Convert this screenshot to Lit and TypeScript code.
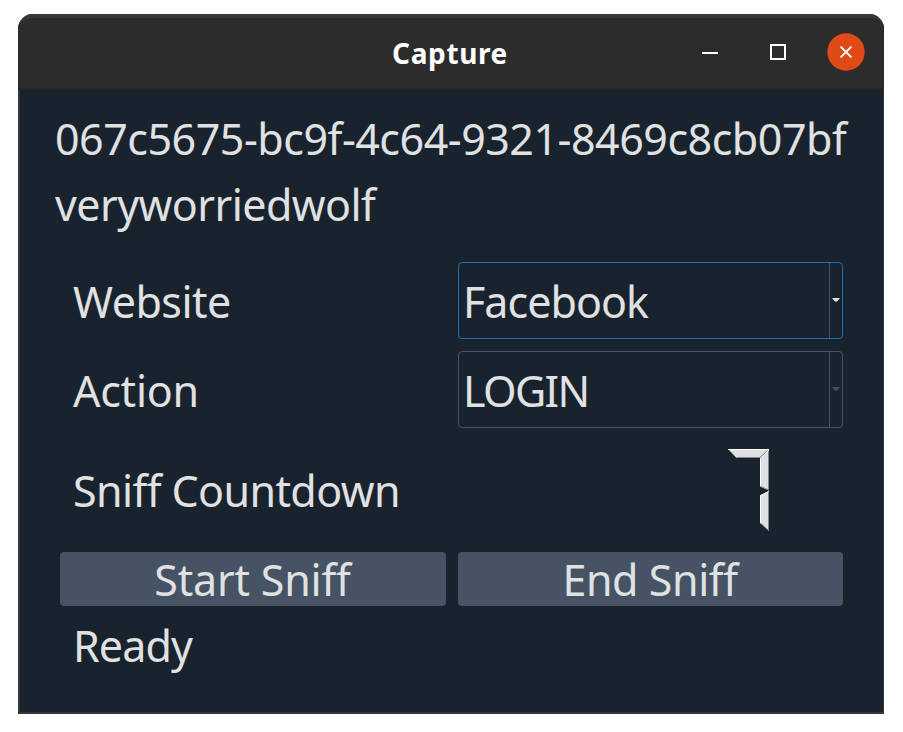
import { LitElement, html, css, svg } from "lit";
import { customElement, property } from "lit/decorators.js";
import { classMap } from "lit/directives/class-map.js";

@customElement("title-bar")
class TitleBar extends LitElement {
  static styles = css`
    :host {
      display: grid;
      grid-template-columns: 1fr auto 1fr;
      align-items: center;
      box-sizing: border-box;
      height: 76px;
      margin: 0 0 0 -2px;
      padding: 0 18px;
      border-top: 4px solid #383838;
      border-bottom: 2px solid #272727;
      border-radius: 15px 15px 0 0;
      background: #2c2c2c;
      color: #fff;
    }
    .title {
      grid-column: 2;
      font-size: 28px;
      font-weight: 700;
      line-height: 38px;
      letter-spacing: 0.62px;
      padding: 0 2px 1px 0;
    }
    .controls {
      display: flex;
      justify-content: flex-end;
      padding-bottom: 2px;
    }
    svg {
      display: block;
    }
  `;

  @property() heading = "";

  render() {
    return html`
      <span class="title">${this.heading}</span>
      <div class="controls">
        <svg width="176" height="40" viewBox="0 0 176 40">
          <rect x="12" y="20" width="16" height="2" fill="#fff" />
          <rect x="81" y="13" width="14" height="14" fill="none" stroke="#fff" stroke-width="2" />
          <circle cx="156" cy="20" r="18.7" fill="#e04a16" />
          <path d="M150.6 14.6 161.4 25.4M161.4 14.6 150.6 25.4" stroke="#fff" stroke-width="2" />
        </svg>
      </div>
    `;
  }
}

@customElement("combo-box")
class ComboBox extends LitElement {
  static styles = css`
    :host {
      display: block;
    }
    .box {
      display: flex;
      box-sizing: border-box;
      height: 77px;
      border: 1px solid #455364;
      border-radius: 4px;
      color: #455364;
    }
    .focused {
      border-color: #1a72bb;
    }
    .value {
      flex: 1;
      padding-left: 4px;
      line-height: 77px;
      color: #e0e1e3;
    }
    .facebook {
      letter-spacing: -0.97px;
    }
    .login {
      letter-spacing: -1.65px;
    }
    .drop {
      display: flex;
      align-items: center;
      justify-content: center;
      box-sizing: border-box;
      width: 13px;
      height: 75px;
      padding-bottom: 1px;
      border-left: 1px solid #455364;
    }
    .focused .drop svg {
      color: #e0e1e3;
    }
  `;

  @property() value = "";
  @property({ type: Boolean }) focused = false;

  render() {
    return html`
      <div class=${classMap({ box: true, focused: this.focused })}>
        <span class=${classMap({ value: true, [this.value.toLowerCase()]: true })}>${this.value}</span>
        <span class="drop">
          <svg width="8" height="4" viewBox="0 0 8 4"><path d="M0 0H8L5.5 3Q4 4.6 2.5 3Z" fill="currentColor" /></svg>
        </span>
      </div>
    `;
  }
}

/* Seven segments of a 42 x 83 digit: face outline, lit edge, shaded edge. */
const SEGMENTS: Record<string, [string, string, string]> = {
  top: ["M0 0H41L32 9H8.5Z", "M0 .5H41", "M8.5 8.5H32L40.5 .5"],
  upperRight: ["M41 0V41.5L32 37.5V9.5Z", "M32.5 37.5V9.5L41 1", "M32 37 40.5 41V1"],
  lowerRight: ["M41 42V82L32 74V46.5Z", "M32.5 74V46.5L40.5 42.5", "M32 73.5 40.5 81.5V43"],
};
const DIGITS: Record<string, string[]> = { "7": ["top", "upperRight", "lowerRight"] };

@customElement("lcd-digit")
class LcdDigit extends LitElement {
  static styles = css`
    svg {
      display: block;
    }
    path {
      fill: none;
    }
    .face {
      fill: #dfe0e2;
    }
    .lit {
      stroke: #fff;
    }
    .shade {
      stroke: #82858a;
    }
  `;

  @property() digit = "7";

  render() {
    return html`
      <svg width="42" height="83" viewBox="0 0 42 83">
        ${DIGITS[this.digit].map((name) => {
          const [face, lit, shade] = SEGMENTS[name];
          return svg`<path class="face" d=${face} /><path class="shade" d=${shade} /><path class="lit" d=${lit} />`;
        })}
      </svg>
    `;
  }
}

@customElement("app-root")
class AppRoot extends LitElement {
  static styles = css`
    :host {
      display: block;
      box-sizing: border-box;
      height: 732px;
      padding: 14px 19px 18px 18px;
      background: #fff;
      font-family: "Noto Sans", sans-serif;
      color: #e0e1e3;
    }
    .window {
      box-sizing: border-box;
      height: 700px;
      border: solid #363638;
      border-width: 0 0 2px 2px;
      border-radius: 15px 15px 0 0;
      background: #19232d;
      box-shadow: inset -1px 0 #363638;
      font-size: 43px;
      white-space: nowrap;
    }
    .content {
      padding: 16px 40px 0 40px;
    }
    .line {
      height: 66px;
      margin-left: -5px;
      line-height: 66px;
    }
    .session {
      letter-spacing: -0.48px;
    }
    .user {
      letter-spacing: -0.55px;
    }
    .form {
      display: grid;
      grid-template-columns: 386px 385px;
      grid-template-rows: 77px 77px 100px 54px 54px;
      gap: 12px;
      margin-top: 24px;
    }
    .label {
      padding-left: 13px;
      line-height: 79px;
    }
    .website {
      letter-spacing: -0.5px;
    }
    .action {
      letter-spacing: -0.25px;
    }
    .countdown {
      line-height: 101px;
      letter-spacing: -0.6px;
    }
    .lcd {
      display: flex;
      justify-content: flex-end;
      padding: 9px 73px 0 0;
    }
    .button {
      height: 54px;
      border: 0;
      border-radius: 4px;
      padding: 0 1px 0 0;
      background: #455364;
      color: #e0e1e3;
      font: inherit;
      line-height: 53px;
    }
    .start {
      letter-spacing: -0.2px;
    }
    .end {
      letter-spacing: -0.42px;
    }
    .status {
      padding-left: 13px;
      line-height: 55px;
      letter-spacing: -0.89px;
    }
  `;

  render() {
    return html`
      <div class="window">
        <title-bar heading="Capture"></title-bar>
        <div class="content">
          <div class="line session">067c5675-bc9f-4c64-9321-8469c8cb07bf</div>
          <div class="line user">veryworriedwolf</div>
          <div class="form">
            <span class="label website">Website</span>
            <combo-box value="Facebook" focused></combo-box>
            <span class="label action">Action</span>
            <combo-box value="LOGIN"></combo-box>
            <span class="label countdown">Sniff Countdown</span>
            <div class="lcd"><lcd-digit digit="7"></lcd-digit></div>
            <button class="button start">Start Sniff</button>
            <button class="button end">End Sniff</button>
            <span class="status">Ready</span>
          </div>
        </div>
      </div>
    `;
  }
}
